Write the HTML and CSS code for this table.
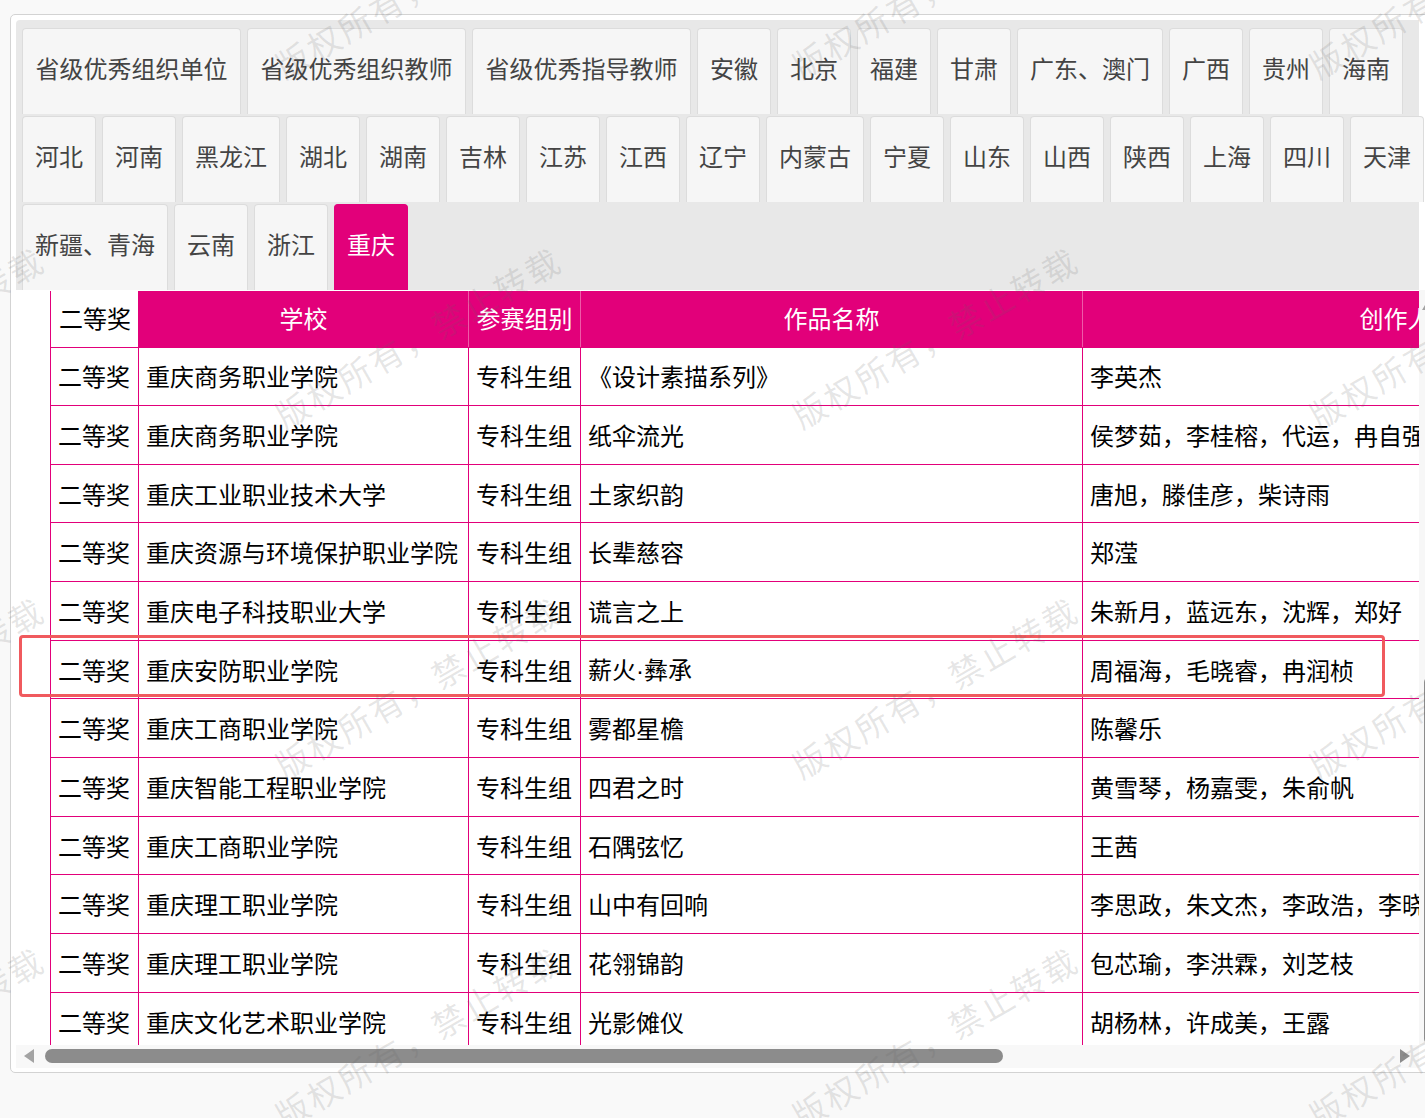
FILE: index.html
```html
<!DOCTYPE html>
<html lang="zh-CN">
<head>
<meta charset="utf-8">
<title>重庆 获奖名单</title>
<link rel="stylesheet" href="styles.css">
</head>
<body>
<div class="page">
  <div class="panel">
    <div class="tabbar">
      <div class="tabs">
        <span class="tab long">省级优秀组织单位</span>
        <span class="tab long">省级优秀组织教师</span>
        <span class="tab long">省级优秀指导教师</span>
        <span class="tab">安徽</span>
        <span class="tab">北京</span>
        <span class="tab">福建</span>
        <span class="tab">甘肃</span>
        <span class="tab">广东、澳门</span>
        <span class="tab">广西</span>
        <span class="tab">贵州</span>
        <span class="tab">海南</span>
        <span class="tab">河北</span>
        <span class="tab">河南</span>
        <span class="tab">黑龙江</span>
        <span class="tab">湖北</span>
        <span class="tab">湖南</span>
        <span class="tab">吉林</span>
        <span class="tab">江苏</span>
        <span class="tab">江西</span>
        <span class="tab">辽宁</span>
        <span class="tab">内蒙古</span>
        <span class="tab">宁夏</span>
        <span class="tab">山东</span>
        <span class="tab">山西</span>
        <span class="tab">陕西</span>
        <span class="tab">上海</span>
        <span class="tab">四川</span>
        <span class="tab">天津</span>
        <span class="tab">新疆、青海</span>
        <span class="tab">云南</span>
        <span class="tab">浙江</span>
        <span class="tab active">重庆</span>
      </div>
    </div>
    <div class="scroller">
      <div class="viewport">
        <table class="awards">
          <colgroup>
            <col class="c1"><col class="c2"><col class="c3"><col class="c4"><col class="c5">
          </colgroup>
          <thead>
            <tr class="head">
              <th class="lead">二等奖</th>
              <th>学校</th>
              <th>参赛组别</th>
              <th>作品名称</th>
              <th>创作人员</th>
            </tr>
          </thead>
          <tbody>
            <tr><td>二等奖</td><td>重庆商务职业学院</td><td>专科生组</td><td>《设计素描系列》</td><td>李英杰</td></tr>
            <tr><td>二等奖</td><td>重庆商务职业学院</td><td>专科生组</td><td>纸伞流光</td><td>侯梦茹，李桂榕，代运，冉自强</td></tr>
            <tr><td>二等奖</td><td>重庆工业职业技术大学</td><td>专科生组</td><td>土家织韵</td><td>唐旭，滕佳彦，柴诗雨</td></tr>
            <tr><td>二等奖</td><td>重庆资源与环境保护职业学院</td><td>专科生组</td><td>长辈慈容</td><td>郑滢</td></tr>
            <tr><td>二等奖</td><td>重庆电子科技职业大学</td><td>专科生组</td><td>谎言之上</td><td>朱新月，蓝远东，沈辉，郑好</td></tr>
            <tr><td>二等奖</td><td>重庆安防职业学院</td><td>专科生组</td><td>薪火<span class="dot">·</span>彝承</td><td>周福海，毛晓睿，冉润桢</td></tr>
            <tr><td>二等奖</td><td>重庆工商职业学院</td><td>专科生组</td><td>雾都星檐</td><td>陈馨乐</td></tr>
            <tr><td>二等奖</td><td>重庆智能工程职业学院</td><td>专科生组</td><td>四君之时</td><td>黄雪琴，杨嘉雯，朱俞帆</td></tr>
            <tr><td>二等奖</td><td>重庆工商职业学院</td><td>专科生组</td><td>石隅弦忆</td><td>王茜</td></tr>
            <tr><td>二等奖</td><td>重庆理工职业学院</td><td>专科生组</td><td>山中有回响</td><td>李思政，朱文杰，李政浩，李晓</td></tr>
            <tr><td>二等奖</td><td>重庆理工职业学院</td><td>专科生组</td><td>花翎锦韵</td><td>包芯瑜，李洪霖，刘芝枝</td></tr>
            <tr><td>二等奖</td><td>重庆文化艺术职业学院</td><td>专科生组</td><td>光影傩仪</td><td>胡杨林，许成美，王露</td></tr>
          </tbody>
        </table>
      </div>
      <div class="vbar">
        <span class="vup"></span>
        <span class="vthumb"></span>
      </div>
    </div>
    <div class="hbar">
      <svg class="harrow" width="12" height="14" viewBox="0 0 12 14"><path d="M11 0 L11 14 L1 7 Z" fill="#a3a3a3"/></svg>
      <span class="hthumb"></span>
      <svg class="harrow right" width="12" height="14" viewBox="0 0 12 14"><path d="M1 0 L1 14 L11 7 Z" fill="#8c8c8c"/></svg>
    </div>
  </div>

  <div class="highlight"></div>

  <div class="wm-layer">
    <div class="wm"><span>版权所有，禁止转载</span></div>
    <div class="wm"><span>版权所有，禁止转载</span></div>
    <div class="wm"><span>版权所有，禁止转载</span></div>
    <div class="wm"><span>版权所有，禁止转载</span></div>
    <div class="wm"><span>版权所有，禁止转载</span></div>
    <div class="wm"><span>版权所有，禁止转载</span></div>
    <div class="wm"><span>版权所有，禁止转载</span></div>
    <div class="wm"><span>版权所有，禁止转载</span></div>
    <div class="wm"><span>版权所有，禁止转载</span></div>
    <div class="wm"><span>版权所有，禁止转载</span></div>
    <div class="wm"><span>版权所有，禁止转载</span></div>
    <div class="wm"><span>版权所有，禁止转载</span></div>
    <div class="wm"><span>版权所有，禁止转载</span></div>
    <div class="wm"><span>版权所有，禁止转载</span></div>
    <div class="wm"><span>版权所有，禁止转载</span></div>
    <div class="wm"><span>版权所有，禁止转载</span></div>
  </div>
</div>
</body>
</html>
```

FILE: styles.css
```css
html, body {
  margin: 0;
  padding: 0;
}
body {
  background: #f9f9f9;
  width: 1425px;
  height: 1118px;
  overflow: hidden;
  font-family: "Noto Sans CJK SC", "Noto Sans", sans-serif;
}
.page {
  position: relative;
  width: 1425px;
  height: 1118px;
  overflow: hidden;
  padding-top: 14px;
  box-sizing: border-box;
}
.panel {
  margin-left: 10px;
  width: 1460px;
  background: #fff;
  border: 1px solid #d3d3d3;
  border-radius: 5px;
  padding: 5px 0 4px 5px;
  box-sizing: border-box;
}
.tabbar {
  width: 1403px;
  height: 270px;
  background: #e8e8e8;
  border-radius: 4px 0 0 0;
  padding: 8px 0 0 6px;
  box-sizing: border-box;
}
.tabs {
  display: flex;
  flex-wrap: wrap;
  width: 1408px;
  column-gap: 6px;
  row-gap: 2px;
}
.tab {
  height: 86px;
  padding: 0 12px 9px;
  display: flex;
  align-items: center;
  background: #f6f6f6;
  border: 1px solid #dcdcdc;
  border-bottom: 0;
  border-radius: 4px 4px 0 0;
  font-size: 24px;
  color: #444;
  box-sizing: border-box;
  white-space: nowrap;
}
.tab.long {
  padding-left: 12.5px;
  padding-right: 12.5px;
}
.tab.active {
  background: #e2007a;
  border-color: #e2007a;
  color: #fff;
}
.scroller {
  display: flex;
  height: 755px;
}
.viewport {
  width: 1403px;
  flex: none;
  overflow: hidden;
  background: #fff;
  padding: 1px 0 0 34px;
  box-sizing: border-box;
}
.awards {
  table-layout: fixed;
  width: 1682px;
  border-collapse: collapse;
  font-size: 24px;
  color: #000;
}
.c1 { width: 88px; }
.c2 { width: 330px; }
.c3 { width: 112px; }
.c4 { width: 502px; }
.c5 { width: 650px; }
.awards th,
.awards td {
  padding: 0 0 0 7px;
  border: 1px solid #e2007a;
  text-align: left;
  white-space: nowrap;
  overflow: hidden;
  line-height: 30px;
  font-weight: normal;
}
.dot {
  font-family: "Liberation Sans", sans-serif;
}
.awards tr.head {
  height: 56px;
}
.awards th {
  background: #e2007a;
  color: #fff;
  text-align: center;
  padding: 0 0 2px;
  border-top: 0;
  border-left-color: #ee5aa8;
  border-right-color: #ee5aa8;
}
.awards th.lead {
  background: #fff;
  color: #000;
  text-align: left;
  padding-left: 8px;
  border-left-color: #e2007a;
  border-right-color: #e2007a;
}
.awards tbody tr {
  height: 58.67px;
}
.vbar {
  width: 17px;
  flex: none;
  background: #f7f7f7;
  display: flex;
  flex-direction: column;
  align-items: center;
}
.vup {
  margin-top: 10px;
  width: 0;
  height: 0;
  border-left: 6px solid transparent;
  border-right: 6px solid transparent;
  border-bottom: 10px solid #a3a3a3;
}
.vthumb {
  margin-top: 366px;
  width: 13px;
  height: 370px;
  border-radius: 7px;
  background: #8c8c8c;
  margin-left: 6px;
}
.hbar {
  width: 1403px;
  height: 23px;
  background: #f8f8f8;
  display: flex;
  align-items: center;
  padding: 0 8px 2px 7px;
  box-sizing: border-box;
}
.harrow {
  flex: none;
}
.hthumb {
  margin-left: 10px;
  width: 958px;
  height: 14px;
  border-radius: 7px;
  background: #8c8c8c;
}
.harrow.right {
  margin-left: auto;
}
.highlight {
  position: absolute;
  left: 19px;
  top: 635px;
  width: 1366px;
  height: 62px;
  border: 3px solid #f05a5e;
  border-radius: 4px;
  box-sizing: border-box;
}
.wm-layer {
  position: absolute;
  left: -358px;
  top: -188px;
  display: grid;
  grid-template-columns: repeat(4, 517px);
  grid-auto-rows: 350px;
  pointer-events: none;
  z-index: 5;
}
.wm {
  display: flex;
  align-items: center;
  justify-content: center;
}
.wm span {
  display: block;
  white-space: nowrap;
  font-size: 33px;
  letter-spacing: 3px;
  color: rgba(100, 100, 100, 0.16);
  transform: rotate(-30deg);
}
```
